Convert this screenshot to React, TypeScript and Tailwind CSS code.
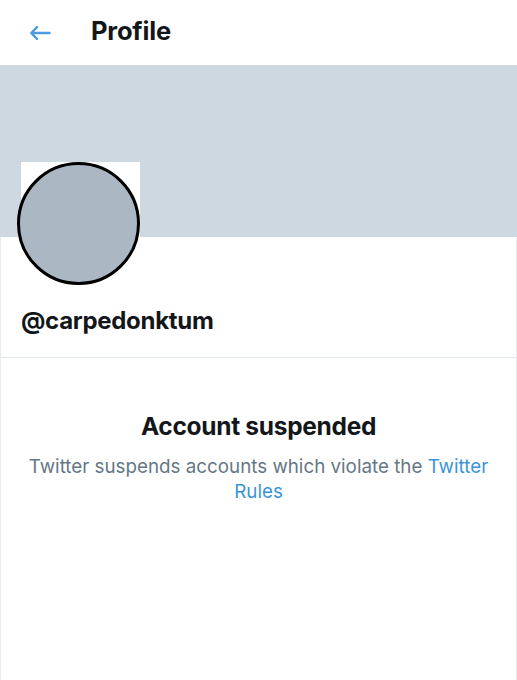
export default function App() {
  return (
    <div
      className="flex h-[680px] w-[517px] flex-col overflow-hidden bg-white text-[#14171a]"
      style={{ fontFamily: 'Inter, "Liberation Sans", sans-serif' }}
    >
      <header className="flex h-[65px] shrink-0 items-center gap-[40px] pl-[29px]">
        <svg
          viewBox="0 0 22 22"
          className="h-[22px] w-[22px] text-[#4c9be0]"
          fill="none"
          stroke="currentColor"
          strokeWidth="2.4"
          strokeLinecap="round"
          strokeLinejoin="round"
        >
          <path d="M20.5 11H2.5M8 5.2l-5.8 5.8 5.8 5.8" />
        </svg>
        <h1 className="pb-[2px] text-[25.5px] font-bold tracking-[-0.2px]">Profile</h1>
      </header>

      <div className="h-[172px] shrink-0 bg-[#ced8e0]" />

      <div className="flex flex-1 flex-col border-x border-[#e6ecf0]">
        <section className="flex h-[121px] flex-col border-b border-[#e1e8ed] pl-[16px]">
          <div className="relative -mt-[75px] h-[123px] w-[123px]">
            <div className="absolute left-[4px] top-0 h-[75px] w-[119px] bg-white" />
            <div className="relative h-[123px] w-[123px] rounded-full border-[3px] border-black bg-[#abb8c3]" />
          </div>
          <div className="mt-[21px] pl-[4px] text-[24px] font-bold leading-[30px] tracking-[-0.3px]">
            @carpedonktum
          </div>
        </section>

        <section className="flex flex-col items-center pt-[53px] text-center">
          <h2 className="text-[24.5px] font-bold leading-[30px] tracking-[-0.3px]">Account suspended</h2>
          <p className="mt-[13px] w-[480px] text-[18.8px] leading-[25px] text-[#657786]">
            Twitter suspends accounts which violate the{" "}
            <span className="text-[#3b94d9]">Twitter Rules</span>
          </p>
        </section>
      </div>
    </div>
  );
}
